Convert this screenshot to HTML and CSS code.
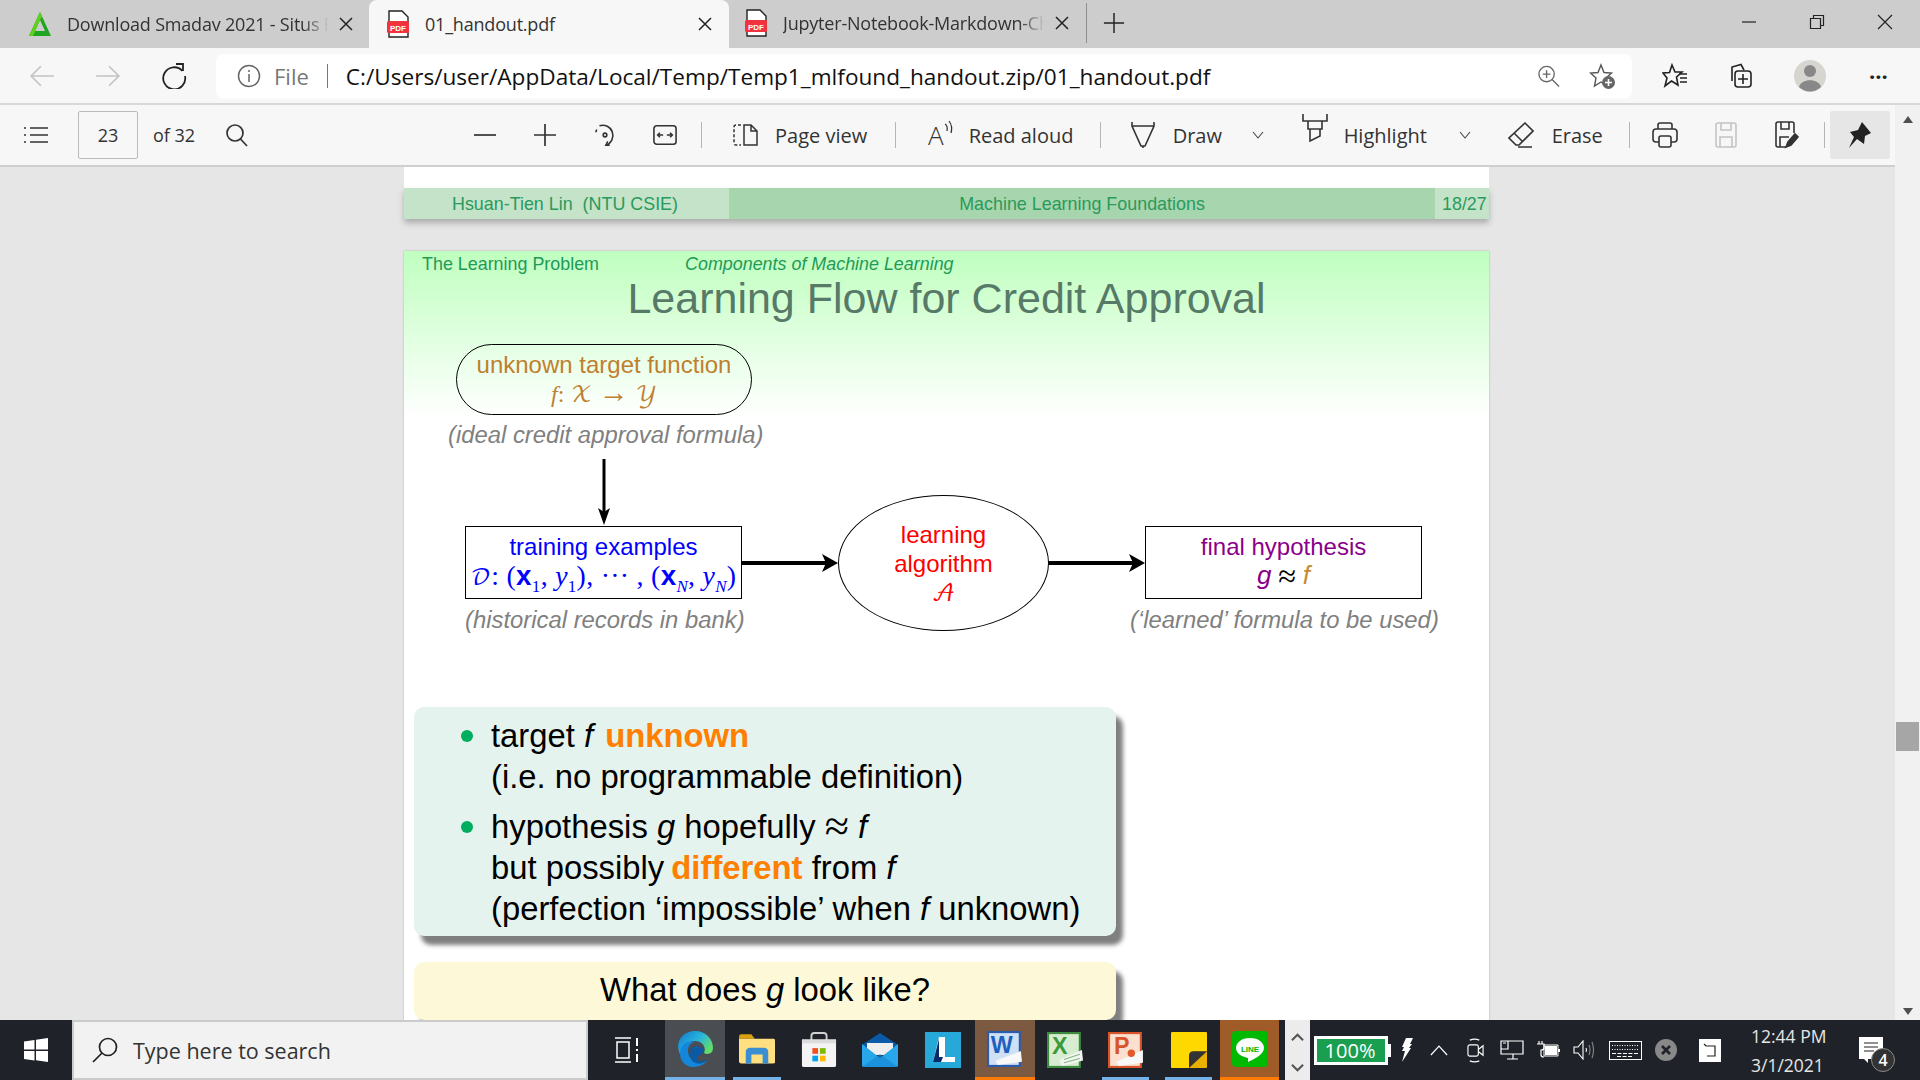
FILE: index.html
```html
<!DOCTYPE html>
<html lang="en">
<head>
    <meta charset="UTF-8">
    <meta name="viewport" content="width=device-width, initial-scale=1.0">
    <title>01_handout.pdf</title>
    <link rel="stylesheet" href="styles.css">
</head>
<body>
    <div class="tabstrip">
        <div class="tab tab-first">
            <svg class="favicon" viewBox="0 0 24 26"><path d="M12 1 23 25H1Z" fill="#1fa51f"/><path d="M12 9 17 20H7Z" fill="#cdcdcd"/><path d="M12 1 14 5 5 25H1Z" fill="#5fd020"/></svg>
            <span class="tab-title">Download Smadav 2021 - Situs Resmi</span>
            <svg class="tab-x" viewBox="0 0 14 14"><path d="M1 1 13 13M13 1 1 13" stroke="#222" stroke-width="1.500"/></svg>
        </div>
        <div class="tab tab-active">
            <svg class="favicon" viewBox="0 0 24 28"><path d="M3 1H16L22 7V27H3Z" fill="#fff" stroke="#222" stroke-width="1.4"/><rect x="1" y="11" width="22" height="12" rx="1.5" fill="#f0333c"/><text x="12" y="20.5" class="pdf-mark">PDF</text></svg>
            <span class="tab-title">01_handout.pdf</span>
            <svg class="tab-x" viewBox="0 0 14 14"><path d="M1 1 13 13M13 1 1 13" stroke="#222" stroke-width="1.500"/></svg>
        </div>
        <div class="tab tab-last">
            <svg class="favicon" viewBox="0 0 24 28"><path d="M3 1H16L22 7V27H3Z" fill="#fff" stroke="#222" stroke-width="1.4"/><rect x="1" y="11" width="22" height="12" rx="1.5" fill="#f0333c"/><text x="12" y="20.5" class="pdf-mark">PDF</text></svg>
            <span class="tab-title">Jupyter-Notebook-Markdown-Cheatsheet</span>
            <svg class="tab-x" viewBox="0 0 14 14"><path d="M1 1 13 13M13 1 1 13" stroke="#222" stroke-width="1.500"/></svg>
        </div>
        <svg class="new-tab" viewBox="0 0 24 24"><path d="M12 1V23M1 12H23" stroke="#222" stroke-width="1.6"/></svg>
        <div class="win-buttons">
            <svg viewBox="0 0 16 16"><path d="M1 8H15" stroke="#222" stroke-width="1.2"/></svg>
            <svg viewBox="0 0 16 16" fill="none" stroke="#222" stroke-width="1.2"><path d="M1.5 4.5H11.5V14.5H1.5ZM4.500 4.500V1.500H14.500V11.500H11.500"/></svg>
            <svg viewBox="0 0 16 16"><path d="M1 1 15 15M15 1 1 15" stroke="#222" stroke-width="1.2"/></svg>
        </div>
    </div>

    <div class="addressbar">
        <svg class="nav-icon nav-back" viewBox="0 0 24 24" fill="none" stroke="#c4c4c4" stroke-width="1.6"><path d="M23 12H2M11 3 2 12 11 21"/></svg>
        <svg class="nav-icon nav-forward" viewBox="0 0 24 24" fill="none" stroke="#c4c4c4" stroke-width="1.6"><path d="M1 12H22M13 3 22 12 13 21"/></svg>
        <svg class="nav-icon nav-reload" viewBox="0 0 26 26" fill="none" stroke="#222" stroke-width="1.8"><path d="M21.500 8A11 11 0 1 0 24 13"/><path d="M15 1H22V8"/></svg>
        <div class="urlbox">
            <svg class="info-icon" viewBox="0 0 24 24" fill="none" stroke="#666" stroke-width="1.5"><circle cx="12" cy="12" r="10.500"/><path d="M12 10V18M12 6V8"/></svg>
            <span class="url-file">File</span>
            <span class="url-sep"></span>
            <span class="url-text">C:/Users/user/AppData/Local/Temp/Temp1_mlfound_handout.zip/01_handout.pdf</span>
            <svg class="url-zoom" viewBox="0 0 24 24" fill="none" stroke="#666" stroke-width="1.400"><circle cx="10" cy="10" r="8"/><path d="M16 16 23 23M10 6V14M6 10H14"/></svg>
            <svg class="url-star" viewBox="0 0 26 26"><path d="M12 2 15 9.500 22.500 10 17 15 18.500 23 12 19 5.500 23 7 15 1.500 10 9 9.500Z" fill="none" stroke="#555" stroke-width="1.400"/><circle cx="19.500" cy="19.500" r="6.500" fill="#666"/><path d="M19.500 16V23M16 19.500H23" stroke="#fff" stroke-width="1.600"/></svg>
        </div>
        <svg class="bar-icon bar-favs" viewBox="0 0 26 26" fill="none" stroke="#222" stroke-width="1.600"><path d="M10 2 13 9H20L14.500 14 16 22 9.500 18 3 23 5 15 1 10 7.500 9.500Z"/><path d="M17 11H25M18 15H25M18 19H25"/></svg>
        <svg class="bar-icon bar-coll" viewBox="0 0 26 26" fill="none" stroke="#222" stroke-width="1.600"><path d="M5 18V4L14 1.500 17 7"/><rect x="8" y="8" width="16" height="16" rx="3"/><path d="M16 11V21M11 16H21"/></svg>
        <svg class="bar-avatar" viewBox="0 0 32 32"><circle cx="16" cy="16" r="16" fill="#d6d5d0"/><circle cx="16" cy="11" r="6" fill="#888"/><path d="M5 27C7 18 25 18 27 27 20 33 12 33 5 27Z" fill="#888"/></svg>
        <span class="bar-more">&#183;&#183;&#183;</span>
    </div>

    <div class="workspace">
        <div class="workspace-main">
            <div class="pdfbar">
                <svg class="tb-list" viewBox="0 0 26 18" fill="none" stroke="#333" stroke-width="1.600"><path d="M7 2H25M7 9H25M7 16H25M1 2H3M1 9H3M1 16H3"/></svg>
                <div class="page-box">23</div>
                <span class="page-total">of 32</span>
                <svg class="tb-search" viewBox="0 0 24 24" fill="none" stroke="#333" stroke-width="1.700"><circle cx="10" cy="10" r="8"/><path d="M15.500 16 22 23"/></svg>

                <button class="tb-btn tb-minus"><svg viewBox="0 0 24 24"><path d="M1 12H23" stroke="#333" stroke-width="1.700"/></svg></button>
                <button class="tb-btn"><svg viewBox="0 0 24 24"><path d="M12 1V23M1 12H23" stroke="#333" stroke-width="1.700"/></svg></button>
                <button class="tb-btn"><svg viewBox="0 0 26 26" fill="none" stroke="#333" stroke-width="1.700"><path d="M7 3A11 11 0 1 1 14 24"/><path d="M18 24 14 24 16 20M3 10 4 7"/><circle cx="13" cy="13" r="2"/></svg></button>
                <button class="tb-btn"><svg viewBox="0 0 26 22" fill="none" stroke="#333" stroke-width="1.700"><rect x="1" y="1" width="24" height="20" rx="3"/><path d="M5 11H11M7.500 8.500 5 11 7.500 13.500M15 11H21M18.500 8.500 21 11 18.500 13.500"/></svg></button>
                <span class="tb-sep tb-sep-a"></span>

                <svg class="tb-glyph tb-pageview" viewBox="0 0 26 24" fill="none" stroke="#333" stroke-width="1.500"><path d="M9 2H4Q2 2 2 4V20Q2 22 4 22H9" stroke-dasharray="3 2"/><path d="M12 2H19L25 8V22H12ZM19 2V8H25"/></svg>
                <span class="tb-label tb-label-page">Page view</span>
                <span class="tb-sep tb-sep-b"></span>

                <span class="tb-readaloud">A<svg viewBox="0 0 10 16" fill="none" stroke="#333" stroke-width="1.200"><path d="M1 4Q4 6 3 11M5 1Q9 6 7 13"/></svg></span>
                <span class="tb-label tb-label-read">Read aloud</span>
                <span class="tb-sep tb-sep-c"></span>

                <svg class="tb-glyph tb-draw" viewBox="0 0 24 28" fill="none" stroke="#333" stroke-width="1.600"><path d="M1 1V5L10 25H14L23 5V1M1 5H23"/><path d="M12 25V27"/></svg>
                <span class="tb-label tb-label-draw">Draw</span>
                <svg class="tb-chev tb-chev-a" viewBox="0 0 12 8" fill="none" stroke="#444" stroke-width="1.100"><path d="M1 1 6 7 11 1"/></svg>

                <svg class="tb-glyph tb-high" viewBox="0 0 26 28" fill="none" stroke="#333" stroke-width="1.600"><path d="M1 0V7H25V0M6 7V15H20V7M8 15V27L18 22V15"/></svg>
                <span class="tb-label tb-label-high">Highlight</span>
                <svg class="tb-chev tb-chev-b" viewBox="0 0 12 8" fill="none" stroke="#444" stroke-width="1.100"><path d="M1 1 6 7 11 1"/></svg>

                <svg class="tb-glyph tb-erase" viewBox="0 0 26 26" fill="none" stroke="#333" stroke-width="1.600"><path d="M17 1 25 9 11 23 8 23 1 16ZM6 11 15 20M10 25H24"/></svg>
                <span class="tb-label tb-label-erase">Erase</span>
                <span class="tb-sep tb-sep-d"></span>

                <svg class="tb-glyph tb-print" viewBox="0 0 26 26" fill="none" stroke="#333" stroke-width="1.600"><path d="M6 7V3Q6 1 8 1H18Q20 1 20 3V7"/><rect x="1" y="7" width="24" height="13" rx="3"/><rect x="7" y="14" width="12" height="11" rx="2" fill="#f7f7f7"/></svg>
                <svg class="tb-glyph tb-save" viewBox="0 0 22 26" fill="none" stroke="#c4c4c4" stroke-width="1.600"><path d="M1 3Q1 1 3 1H19Q21 1 21 3V23Q21 25 19 25H3Q1 25 1 23ZM6 1V8H16V1M5 25V15H17V25"/></svg>
                <svg class="tb-glyph tb-saveas" viewBox="0 0 24 28" fill="none" stroke="#333" stroke-width="1.600"><path d="M11 26H3Q1 26 1 24V3Q1 1 3 1H17Q19 1 19 3V12M6 1V8H14V1M5 26V16H14"/><path d="M11 26 13 21 20 13 23 16 16 24Z" fill="#333"/></svg>
                <span class="tb-sep tb-sep-e"></span>
                <div class="tb-pin"><svg viewBox="0 0 24 28"><path d="M14 1 23 12 17 15 16 23 9 18 1 27 6 16 2 11 10 9Z" fill="#222"/></svg></div>
            </div>

            <div class="viewer">
                <div class="page">
                    <div class="prev-white"></div>
                    <div class="slide-foot">
                        <div class="foot-author">Hsuan-Tien Lin&nbsp; (NTU CSIE)</div>
                        <div class="foot-course">Machine Learning Foundations</div>
                        <div class="foot-num">18/27</div>
                    </div>
                    <div class="page-gap"></div>
                    <div class="slide">
                        <div class="slide-crumb">
                            <span class="crumb-a">The Learning Problem</span>
                            <span class="crumb-b">Components of Machine Learning</span>
                        </div>
                        <h1 class="slide-title">Learning Flow for Credit Approval</h1>

                        <div class="diagram">
                            <div class="node node-target">unknown target function<br><span class="math">f</span><span class="math-up">:</span> <span class="cal">&#x1D4B3;</span> <span class="arrow">&#8594;</span> <span class="cal">&#x1D4B4;</span></div>
                            <div class="note note-target">(ideal credit approval formula)</div>

                            <svg class="wires" viewBox="0 0 1086 300" fill="#000">
                                <path d="M200 119V180" stroke="#000" stroke-width="3"/>
                                <path d="M200 185 194 168 200 172 206 168Z"/>
                                <path d="M337 223H425" stroke="#000" stroke-width="4"/>
                                <path d="M434 223 418 214 422 223 418 232Z"/>
                                <path d="M644 223H732" stroke="#000" stroke-width="4"/>
                                <path d="M741 223 725 214 729 223 725 232Z"/>
                            </svg>

                            <div class="node node-train"><span class="blue">training examples</span><br><span class="formula"><span class="cal">&#x1D49F;</span>: (<b>x</b><sub>1</sub>, <i>y</i><sub>1</sub>), &#183;&#183;&#183; , (<b>x</b><sub><i>N</i></sub>, <i>y</i><sub><i>N</i></sub>)</span></div>
                            <div class="note note-train">(historical records in bank)</div>

                            <div class="node node-algo">learning<br>algorithm<br><span class="cal">&#x1D49C;</span></div>

                            <div class="node node-final"><span class="purple">final hypothesis</span><br><i class="purple g-sym">g</i> <span class="approx">&#8776;</span> <i class="orange-f">f</i></div>
                            <div class="note note-final">(&#8216;learned&#8217; formula to be used)</div>
                        </div>

                        <div class="callout callout-green">
                            <ul class="points">
                                <li>target <i>f</i> <b class="hot hot-unknown">unknown</b><br>(i.e. no programmable definition)</li>
                                <li>hypothesis <i>g</i> hopefully <span class="approx">&#8776;</span> <i>f</i><br>but possibly <b class="hot hot-different">different</b> from <i>f</i><br>(perfection &#8216;impossible&#8217; when <i>f</i> unknown)</li>
                            </ul>
                        </div>
                        <div class="callout callout-yellow">What does <i>g</i> look like?</div>
                    </div>
                </div>
            </div>
        </div>
        <div class="scrollcol">
            <span class="scroll-up"></span>
            <span class="scroll-thumb"></span>
            <span class="scroll-down"></span>
        </div>
    </div>

    <div class="taskbar">
        <div class="start"><svg viewBox="0 0 24 24" fill="#fff"><path d="M0 3.500 10.500 2V11.500H0ZM12 1.800 24 0V11.500H12ZM0 13H10.500V22.500L0 21ZM12 13H24V24L12 22.300Z"/></svg></div>
        <div class="searchbox">
            <svg viewBox="0 0 26 26" fill="none" stroke="#222" stroke-width="1.700"><circle cx="16" cy="10" r="8.500"/><path d="M10 16 1 25"/></svg>
            <span>Type here to search</span>
        </div>
        <div class="task task-view"><svg viewBox="0 0 26 26" fill="none" stroke="#fff" stroke-width="1.500"><path d="M1 1H17M1 25H17M3 5H15V21H3Z"/><path d="M23 1V9M23 12V14M23 17V25" stroke-width="2"/></svg></div>
        <div class="task task-edge"><svg viewBox="0 0 36 36"><defs><linearGradient id="edgeA" x1="0" y1="0" x2="1" y2="0.600"><stop offset="0" stop-color="#0c78d4"/><stop offset="0.600" stop-color="#2bb5dc"/><stop offset="1" stop-color="#5fdc6c"/></linearGradient></defs><path d="M18 0C29 0 36 8 36 17 36 23 30 24 27 22 30 15 24 10 18 10 9 10 4 17 3 23 -3 11 6 0 18 0Z" fill="url(#edgeA)"/><path d="M3 23C3 12 12 9 18 11 10 12 9 22 14 28 19 34 28 33 32 27 28 34 21 36 16 36 9 36 3 30 3 23Z" fill="#1487db"/><path d="M13 23C13 15 21 12 27 19 25 25 19 24 20 28 22 31 28 31 32 27 26 36 13 34 13 23Z" fill="#0c59a4"/></svg></div>
        <div class="task task-explorer"><svg viewBox="0 0 32 30"><path d="M0 3Q0 1 2 1H11L14 5H0Z" fill="#d9a10e"/><path d="M0 5H31Q32 5 32 7V26Q32 27 30 27H2Q0 27 0 25Z" fill="#ffdf7f"/><path d="M6 27V17Q6 13 10 13H22Q26 13 26 17V27H21V19H11V27Z" fill="#3a8fd3"/></svg></div>
        <div class="task task-store"><svg viewBox="0 0 36 38"><path d="M10 9V4Q10 1 13 1H23Q26 1 26 4V9" fill="none" stroke="#d0d0d0" stroke-width="2"/><path d="M0 8H36V35Q36 37 34 37H2Q0 37 0 35Z" fill="#f4f4f4"/><path d="M0 8H36V12H0Z" fill="#dcdcdc"/><rect x="11" y="17" width="6" height="6" fill="#f25022"/><rect x="19" y="17" width="6" height="6" fill="#7fba00"/><rect x="11" y="25" width="6" height="6" fill="#00a4ef"/><rect x="19" y="25" width="6" height="6" fill="#ffb900"/></svg></div>
        <div class="task task-mail"><svg viewBox="0 0 36 34"><path d="M0 12 18 0 36 12V20H0Z" fill="#0a5aa8"/><path d="M5 10H31V22H5Z" fill="#eee"/><path d="M0 11 18 25 36 11V32Q36 34 34 34H2Q0 34 0 32Z" fill="#28a8ea"/><path d="M0 34 18 21 36 34Z" fill="#1787d6" opacity="0.700"/></svg></div>
        <div class="task task-launch"><svg viewBox="0 0 36 36"><rect width="36" height="36" fill="#26a9d8"/><path d="M14 5H20V25H30V30H8Z" fill="#fff"/><path d="M8 30 14 7V25H18L16 30Z" fill="#0a2a6a"/></svg></div>
        <div class="task task-word"><svg viewBox="0 0 34 34"><rect x="1" y="1" width="30" height="32" fill="#cfe0f5" stroke="#2a5cae" stroke-width="2"/><text x="14" y="21" class="office-letter word-letter">W</text><path d="M8 28 32 19 33 29 10 32Z" fill="#f8f8f8"/></svg></div>
        <div class="task task-excel"><svg viewBox="0 0 34 34"><rect x="1" y="1" width="30" height="32" fill="#d8ecd0" stroke="#3d8c40" stroke-width="2"/><text x="12" y="21" class="office-letter excel-letter">X</text><path d="M12 26 33 17 34 27 14 32Z" fill="#f4f4f4"/><path d="M16 26 31 21M16 29 31 25" stroke="#7cbb7c"/></svg></div>
        <div class="task task-ppt"><svg viewBox="0 0 34 34"><rect x="1" y="1" width="30" height="32" fill="#fbe0cf" stroke="#d8552a" stroke-width="2"/><text x="13" y="21" class="office-letter ppt-letter">P</text><path d="M8 28 33 17 33 29 10 32Z" fill="#f8f8f8"/><circle cx="22" cy="20" r="3.500" fill="#e25a2a"/></svg></div>
        <div class="task task-sticky"><svg viewBox="0 0 32 32"><path d="M1 0H31Q32 0 32 1V17L16 32H1Q0 32 0 31V1Q0 0 1 0Z" fill="#ffd800"/><path d="M32 17V31Q32 32 31 32H16V21Q16 17 20 17Z" fill="#eab000"/><path d="M16 32V21Q16 17 20 17H32Z" fill="#333"/></svg></div>
        <div class="task task-line"><svg viewBox="0 0 36 36"><rect width="36" height="36" rx="4" fill="#00b900"/><path d="M18 7C9 7 4 12 4 17 4 23 11 26 16 27V31C20 29 32 24 32 17 32 12 27 7 18 7Z" fill="#fff"/><text x="18" y="20.500" class="line-mark">LINE</text></svg></div>
        <div class="task-edge-strip"></div>
        <div class="tray-scroll">
            <svg viewBox="0 0 14 8" fill="none" stroke="#555" stroke-width="2.200"><path d="M1 7 7 1 13 7"/></svg>
            <svg viewBox="0 0 14 8" fill="none" stroke="#555" stroke-width="2.200"><path d="M1 1 7 7 13 1"/></svg>
        </div>
        <div class="tray">
            <div class="batt"><div class="batt-fill">100%</div></div>
            <span class="batt-nub"></span>
            <svg class="tray-ico tr-bolt" viewBox="0 0 12 24"><path d="M5 0H12L9 6 11 6 8 10 10 10 1 24 4 13 1 13 3 9 1 9Z" fill="#fff"/></svg>
            <svg class="tray-ico tr-caret" viewBox="0 0 20 12" fill="none" stroke="#fff" stroke-width="1.300"><path d="M1 11 10 1 19 11"/></svg>
            <svg class="tray-ico tr-cam" viewBox="0 0 18 26" fill="none" stroke="#fff" stroke-width="1.200"><rect x="1" y="7" width="11" height="12" rx="2"/><path d="M12 12 17 8V18L12 14M3 2Q8 0 13 2M3 24Q8 26 13 24" /></svg>
            <svg class="tray-ico tr-mon" viewBox="0 0 24 20" fill="none" stroke="#fff" stroke-width="1.200"><path d="M8 1H23V14H1V9M1 1H8V9H1ZM13 14V19M7 19H18M3 3H6"/></svg>
            <svg class="tray-ico tr-plug" viewBox="0 0 24 18" fill="#fff"><path d="M3 0V3M6 0V3M1 3H8V7Q8 9 5 9V14Q5 16 8 16" fill="none" stroke="#fff" stroke-width="1.200"/><path d="M8 4H22V15H8Z" fill="none" stroke="#fff"/><rect x="9" y="5" width="12" height="9"/><rect x="22" y="8" width="2" height="3"/></svg>
            <svg class="tray-ico tr-vol" viewBox="0 0 22 20" fill="none" stroke="#fff" stroke-width="1.100"><path d="M1 7H5L10 1V19L5 13H1Z"/><path d="M13 8Q14 10 13 12" /><path d="M16 5Q18 10 16 15M19 2Q22 10 19 18" stroke="#888"/></svg>
            <svg class="tray-ico tr-kbd" viewBox="0 0 33 19" fill="none" stroke="#fff"><rect x="0.500" y="0.500" width="32" height="18"/><path d="M3 4.500H30M3 8.500H30" stroke-dasharray="1 1.500"/><path d="M3 12.500H30M8 15.500H24" stroke-dasharray="4 1.500"/></svg>
            <svg class="tray-ico tr-off" viewBox="0 0 22 22"><circle cx="11" cy="11" r="11" fill="#888"/><path d="M7 7 15 15M15 7 7 15" stroke="#1f2329" stroke-width="2.600"/></svg>
            <svg class="tray-ico tr-tile" viewBox="0 0 22 23"><rect width="22" height="23" fill="#fff"/><path d="M5 5 7 7H16V17H8" fill="none" stroke="#222" stroke-width="1.200"/></svg>
            <div class="clock"><span>12:44 PM</span><span>3/1/2021</span></div>
            <div class="notify">
                <svg viewBox="0 0 24 26"><path d="M0 0H24V22H9L9 26 5 22H0Z" fill="#fff"/><path d="M5 6H19M5 10H19M5 14H15" stroke="#222"/></svg>
                <span class="notify-count">4</span>
            </div>
        </div>
    </div>
</body>
</html>
```

FILE: styles.css
```css
* {
    margin: 0;
    padding: 0;
    box-sizing: border-box;
}

html,
body {
    width: 1920px;
    height: 1080px;
    overflow: hidden;
}

body {
    display: flex;
    flex-direction: column;
    font-family: "Open Sans", "Noto Sans", sans-serif;
    background-color: #f7f7f7;
}

svg {
    display: block;
    flex: none;
}

/* tabs */
.tabstrip {
    display: flex;
    flex: none;
    align-items: flex-start;
    height: 48px;
    background-color: #cdcdcd;
}

.tab {
    display: flex;
    align-items: center;
    height: 47px;
    font-size: 18px;
    color: #333;
}

.tab-first {
    width: 369px;
    padding: 0 16px 0 28px;
}

.tab-active {
    width: 360px;
    height: 48px;
    padding: 0 17px 1px 17px;
    background-color: #f7f7f7;
    border-radius: 8px 8px 0 0;
}

.tab-last {
    width: 358px;
    height: 40px;
    margin-top: 3px;
    padding: 0 17px 0 15px;
    border-right: 1px solid #8f8f8f;
}

.favicon {
    width: 24px;
    height: 28px;
}

.tab-title {
    flex: 1;
    min-width: 0;
    margin: 0 10px 0 15px;
    white-space: nowrap;
    overflow: hidden;
    letter-spacing: -0.2px;
    -webkit-mask-image: linear-gradient(to right, #000 90%, transparent 100%);
    mask-image: linear-gradient(to right, #000 90%, transparent 100%);
}

.tab-active .tab-title {
    -webkit-mask-image: none;
    mask-image: none;
}

.tab-x {
    width: 14px;
    height: 14px;
}

.pdf-mark {
    font: bold 8px "Liberation Sans", sans-serif;
    fill: #fff;
    text-anchor: middle;
}

.new-tab {
    width: 22px;
    height: 22px;
    margin: 12px 0 0 16px;
}

.win-buttons {
    display: flex;
    gap: 52px;
    margin-left: auto;
    padding: 14px 27px 0 0;
}

.win-buttons svg {
    width: 16px;
    height: 16px;
}

/* address bar */
.addressbar {
    display: flex;
    flex: none;
    align-items: center;
    height: 57px;
    padding-top: 1px;
    border-bottom: 2px solid #d8d8d8;
    background-color: #f7f7f7;
}

.nav-icon {
    width: 26px;
    height: 26px;
}

.nav-back {
    margin-left: 29px;
}

.nav-forward {
    margin-left: 40px;
}

.nav-reload {
    margin-left: 40px;
}

.urlbox {
    display: flex;
    align-items: center;
    width: 1416px;
    height: 45px;
    margin-left: 29px;
    padding-left: 21px;
    background-color: #fff;
    border-radius: 8px;
}

.info-icon {
    width: 24px;
    height: 24px;
}

.url-file {
    margin-left: 13px;
    font-size: 22px;
    color: #777;
}

.url-sep {
    width: 1px;
    height: 24px;
    margin-left: 18px;
    background-color: #777;
}

.url-text {
    width: 1191px;
    margin-left: 18px;
    font-size: 22.600px;
    color: #111;
    white-space: nowrap;
}

.url-zoom {
    width: 23px;
    height: 24px;
}

.url-star {
    width: 26px;
    height: 26px;
    margin-left: 29px;
}

.bar-icon {
    width: 26px;
    height: 26px;
}

.bar-favs {
    margin-left: 30px;
}

.bar-coll {
    margin-left: 39px;
}

.bar-avatar {
    width: 32px;
    height: 34px;
    margin-left: 41px;
}

.bar-more {
    margin-left: 43px;
    font-size: 22px;
    font-weight: 700;
    color: #222;
}

/* pdf toolbar + viewer */
.workspace {
    display: flex;
    flex: 1;
    min-height: 0;
}

.workspace-main {
    display: flex;
    flex-direction: column;
    width: 1895px;
}

.pdfbar {
    display: flex;
    align-items: center;
    height: 62px;
    flex: none;
    border-bottom: 2px solid #cfcfcf;
    font-size: 20px;
    color: #333;
    white-space: nowrap;
}

.pdfbar span,
.pdfbar svg,
.pdfbar button,
.pdfbar div {
    flex: none;
}

.tb-list {
    width: 26px;
    height: 18px;
    margin-left: 23px;
}

.page-box {
    width: 60px;
    height: 48px;
    margin-left: 29px;
    border: 1px solid #bbb;
    border-radius: 2px;
    font-size: 18px;
    line-height: 46px;
    text-align: center;
}

.page-total {
    width: 46px;
    margin-left: 15px;
    font-size: 18px;
}

.tb-search {
    width: 24px;
    height: 24px;
    margin-left: 26px;
}

.tb-btn {
    display: flex;
    align-items: center;
    justify-content: center;
    width: 60px;
    height: 48px;
    border: 0;
    background: none;
}

.tb-btn svg {
    width: 24px;
    height: 24px;
}

.tb-minus {
    margin-left: 206px;
}

.tb-sep {
    width: 1px;
    height: 26px;
    background-color: #b5b5b5;
}

.tb-sep-a {
    margin-left: 6px;
}

.tb-pageview {
    width: 26px;
    height: 24px;
    margin-left: 30px;
}

.tb-label-page {
    width: 93px;
    margin-left: 17px;
}

.tb-sep-b {
    margin-left: 27px;
}

.tb-readaloud {
    display: flex;
    margin-left: 32px;
    font-size: 26px;
    line-height: 30px;
    font-weight: 300;
}

.tb-readaloud svg {
    width: 10px;
    height: 16px;
}

.tb-label-read {
    width: 104px;
    margin-left: 15px;
}

.tb-sep-c {
    margin-left: 27px;
}

.tb-draw {
    width: 24px;
    height: 28px;
    margin-left: 30px;
}

.tb-label-draw {
    width: 47px;
    margin-left: 18px;
}

.tb-chev {
    width: 12px;
    height: 8px;
}

.tb-chev-a {
    margin-left: 32px;
}

.tb-high {
    width: 26px;
    height: 28px;
    margin: -14px 0 0 38px;
}

.tb-label-high {
    width: 86px;
    margin-left: 16px;
}

.tb-chev-b {
    margin-left: 29px;
}

.tb-erase {
    width: 26px;
    height: 26px;
    margin-left: 37px;
}

.tb-label-erase {
    width: 48px;
    margin-left: 18px;
}

.tb-sep-d {
    margin-left: 29px;
}

.tb-print {
    width: 26px;
    height: 26px;
    margin-left: 22px;
}

.tb-save {
    width: 22px;
    height: 26px;
    margin-left: 37px;
}

.tb-saveas {
    width: 24px;
    height: 28px;
    margin-left: 38px;
}

.tb-sep-e {
    margin-left: 25px;
}

.tb-pin {
    display: flex;
    align-items: center;
    justify-content: center;
    width: 60px;
    height: 48px;
    margin-left: 5px;
    background-color: #e6e6e6;
    border-radius: 2px;
}

.tb-pin svg {
    width: 24px;
    height: 28px;
}

.viewer {
    flex: 1;
    min-height: 0;
    padding-left: 404px;
    background-color: #e6e6e6;
    overflow: hidden;
}

.page {
    width: 1085px;
    height: 100%;
    font-family: "Liberation Sans", sans-serif;
}

.prev-white {
    height: 21px;
    background-color: #fff;
}

.slide-foot {
    display: flex;
    height: 31px;
    font-size: 17.900px;
    line-height: 32px;
    color: #2a9a5c;
    box-shadow: 0 4px 6px rgba(0, 0, 0, 0.25);
}

.foot-author {
    width: 325px;
    padding-left: 48px;
    background-color: #c5e3c9;
}

.foot-course {
    width: 706px;
    text-align: center;
    background-color: #a7d5ad;
}

.foot-num {
    width: 54px;
    padding-left: 7px;
    background-color: #c5e3c9;
}

.page-gap {
    height: 32px;
}

.slide {
    height: 769px;
    background: linear-gradient(#bfffbf 0, #fff 165px);
    box-shadow: 0 0 2px rgba(0, 0, 0, 0.25);
}

.slide-crumb {
    display: flex;
    height: 25px;
    padding-left: 18px;
    font-size: 17.900px;
    line-height: 26px;
    color: #1f9a58;
}

.crumb-b {
    margin-left: 86px;
    font-style: italic;
}

.slide-title {
    height: 64px;
    font-size: 43px;
    font-weight: 400;
    line-height: 44px;
    text-align: center;
    color: #577a68;
}

/* flow diagram, nodes sit on a free canvas */
.diagram {
    position: relative;
    height: 367px;
    font-size: 24px;
    line-height: 29px;
}

.wires {
    position: absolute;
    top: 0;
    left: 0;
    width: 1086px;
    height: 300px;
}

.node {
    position: absolute;
    text-align: center;
    background: transparent;
}

.node-target {
    top: 4px;
    left: 52px;
    width: 296px;
    height: 71px;
    padding-top: 5px;
    border: 1.500px solid #000;
    border-radius: 36px;
    color: #bf7f2e;
}

.node-train {
    top: 186px;
    left: 61px;
    width: 277px;
    height: 73px;
    padding-top: 5px;
    border: 1.500px solid #000;
    color: #0000ff;
}

.node-algo {
    top: 155px;
    left: 434px;
    width: 211px;
    height: 136px;
    padding-top: 24px;
    border: 1.500px solid #000;
    border-radius: 50%;
    color: #ff0000;
}

.node-final {
    top: 186px;
    left: 741px;
    width: 277px;
    height: 73px;
    padding-top: 5px;
    border: 1.500px solid #000;
}

.note {
    position: absolute;
    font-size: 23.850px;
    font-style: italic;
    color: #808080;
    white-space: nowrap;
}

.note-target {
    top: 80px;
    left: 44px;
}

.note-train {
    top: 265px;
    left: 61px;
}

.note-final {
    top: 265px;
    left: 726px;
}

.math {
    font-family: "Liberation Serif", serif;
    font-style: italic;
}

.math-up {
    font-family: "Liberation Serif", serif;
}

.arrow {
    font-family: "Liberation Serif", serif;
    font-size: 30px;
    font-weight: 400;
    line-height: 0;
}

.cal {
    font-family: "DejaVu Math TeX Gyre", "DejaVu Serif", serif;
    font-size: 22px;
}

.formula {
    font-family: "Liberation Serif", serif;
    font-size: 27.800px;
    line-height: 30px;
    letter-spacing: 0.300px;
    white-space: nowrap;
}

.formula sub {
    font-size: 17px;
    line-height: 0;
}

.formula i {
    font-style: italic;
}

.formula b {
    font-family: "Liberation Sans", sans-serif;
}

.purple {
    color: #8b008b;
}

.g-sym,
.orange-f {
    font-size: 26px;
}

.orange-f {
    color: #c98a2e;
}

.approx {
    position: relative;
    top: 3px;
    font-family: "Liberation Serif", serif;
    font-size: 1.350em;
    line-height: 0;
}

/* callouts */
.callout {
    width: 702px;
    margin-left: 10px;
    background-color: #e5f3ee;
    border-radius: 10px;
    box-shadow: 7px 9px 4px rgba(0, 0, 0, 0.5);
    font-size: 32.800px;
    line-height: 41px;
    color: #000;
}

.callout-green {
    height: 229px;
    padding: 8px 0 0 77px;
}

.points {
    list-style: none;
}

.points li {
    position: relative;
    margin-bottom: 9px;
    white-space: nowrap;
}

.points li::before {
    content: "";
    position: absolute;
    top: 15px;
    left: -30px;
    width: 12px;
    height: 12px;
    border-radius: 50%;
    background-color: #00ae5e;
}

.hot {
    color: #ff7f00;
}

.hot-unknown {
    margin-left: 3px;
}

.hot-different {
    margin-left: -2px;
}

.callout-yellow {
    height: 58px;
    margin-top: 26px;
    padding-top: 7px;
    background-color: #fdf9d8;
    text-align: center;
}

/* scrollbar */
.scrollcol {
    position: relative;
    width: 25px;
    background-color: #f1f1f1;
}

.scroll-up,
.scroll-down {
    position: absolute;
    left: 8px;
    width: 0;
    height: 0;
    border-left: 5px solid transparent;
    border-right: 5px solid transparent;
}

.scroll-up {
    top: 11px;
    border-bottom: 7px solid #505050;
}

.scroll-down {
    bottom: 5px;
    border-top: 7px solid #505050;
}

.scroll-thumb {
    position: absolute;
    top: 617px;
    left: 1px;
    width: 23px;
    height: 29px;
    background-color: #a6a6a6;
}

/* taskbar */
.taskbar {
    display: flex;
    flex: none;
    height: 60px;
    background-color: #1f2329;
}

.start {
    display: flex;
    align-items: center;
    justify-content: center;
    width: 72px;
}

.start svg {
    width: 24px;
    height: 24px;
}

.searchbox {
    display: flex;
    align-items: center;
    width: 516px;
    padding-left: 18px;
    background-color: #f2f2f2;
    border: 2px solid #cbcbcb;
    font-size: 21.500px;
    color: #333;
}

.searchbox svg {
    width: 26px;
    height: 26px;
}

.searchbox span {
    margin-left: 15px;
}

.task {
    position: relative;
    display: flex;
    align-items: center;
    justify-content: center;
    height: 60px;
}

.task svg {
    width: 36px;
    height: 36px;
}

.task-view {
    width: 77px;
}

.task-view svg {
    width: 26px;
    height: 26px;
}

.task-edge {
    width: 60px;
    background-color: #4a4e52;
    border-bottom: 3px solid #74b2e8;
}

.task-explorer {
    width: 64px;
}

.task-explorer::after,
.task-ppt::after,
.task-sticky::after {
    content: "";
    position: absolute;
    bottom: 0;
    left: 8px;
    right: 8px;
    height: 3px;
    background-color: #74b2e8;
}

.task-store {
    width: 60px;
}

.task-mail {
    width: 62px;
}

.task-launch {
    width: 64px;
}

.task-word {
    width: 60px;
    background-color: #7c5a42;
    border-bottom: 3px solid #ff7a00;
}

.task-excel {
    width: 59px;
}

.task-ppt {
    width: 63px;
}

.task-sticky {
    width: 63px;
}

.task-line {
    width: 59px;
    background-color: #a05c28;
    border-bottom: 3px solid #ff7a00;
}

.office-letter {
    font: 900 22px "Liberation Sans", sans-serif;
    text-anchor: middle;
}

.word-letter {
    fill: #1e5fc0;
}

.excel-letter {
    fill: #3c9a3c;
}

.ppt-letter {
    fill: #d8552a;
}

.line-mark {
    font: bold 8px "Liberation Sans", sans-serif;
    fill: #00b900;
    text-anchor: middle;
}

.task-edge-strip {
    width: 6px;
    background-color: #1f2329;
}

.tray-scroll {
    display: flex;
    flex-direction: column;
    align-items: center;
    justify-content: space-between;
    width: 25px;
    padding: 13px 0 8px;
    background-color: #ececec;
}

.tray-scroll svg {
    width: 13px;
    height: 9px;
}

.tray {
    display: flex;
    align-items: center;
    flex: 1;
    color: #fff;
}

.batt {
    width: 74px;
    height: 29px;
    margin-left: 4px;
    padding: 3px;
    background-color: #fff;
}

.batt-fill {
    height: 23px;
    padding-right: 2px;
    background-color: #1a9e50;
    font-family: "Open Sans", sans-serif;
    font-size: 20px;
    line-height: 23px;
    text-align: center;
}

.batt-nub {
    width: 3px;
    height: 13px;
    background-color: #fff;
}

.tray-ico {
    flex: none;
}

.tr-bolt {
    width: 12px;
    height: 24px;
    margin-left: 10px;
}

.tr-caret {
    width: 18px;
    height: 11px;
    margin-left: 17px;
}

.tr-cam {
    width: 17px;
    height: 25px;
    margin-left: 19px;
}

.tr-mon {
    width: 24px;
    height: 20px;
    margin-left: 16px;
}

.tr-plug {
    width: 24px;
    height: 18px;
    margin-left: 12px;
}

.tr-vol {
    width: 22px;
    height: 20px;
    margin-left: 13px;
}

.tr-kbd {
    width: 33px;
    height: 19px;
    margin-left: 14px;
}

.tr-off {
    width: 22px;
    height: 22px;
    margin-left: 13px;
}

.tr-tile {
    width: 22px;
    height: 23px;
    margin-left: 22px;
}

.clock {
    display: flex;
    flex-direction: column;
    gap: 7px;
    width: 86px;
    margin-left: 30px;
    font-size: 17.500px;
    line-height: 22px;
    color: #e6e6e6;
}

.notify {
    position: relative;
    width: 24px;
    height: 26px;
    margin-left: 22px;
}

.notify svg {
    width: 24px;
    height: 26px;
}

.notify-count {
    position: absolute;
    top: 11px;
    left: 12px;
    width: 24px;
    height: 24px;
    border: 1px solid #888;
    border-radius: 50%;
    background-color: #333;
    font-size: 16px;
    font-weight: 600;
    line-height: 22px;
    text-align: center;
}
```
